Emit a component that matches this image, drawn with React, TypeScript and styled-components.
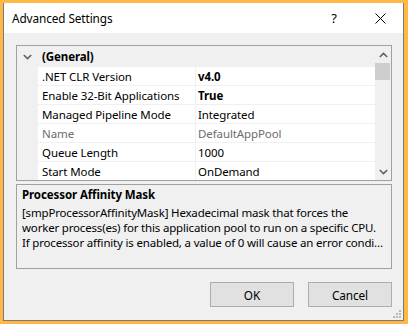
import React from "react";
import styled, { createGlobalStyle } from "styled-components";

const FONT = `"Noto Sans", "Open Sans", sans-serif`;

const GlobalStyle = createGlobalStyle`
  html, body { margin: 0; padding: 0; }
  body { font-family: ${FONT}; font-size: 11.5px; color: #000; letter-spacing: -0.1px; }
  * { box-sizing: border-box; }
`;

const Frame = styled.div`
  width: 408px;
  height: 324px;
  background: #ffb845;
  padding: 3px 4px 3px 3px;
  display: flex;
  overflow: hidden;
`;

const Window = styled.div`
  position: relative;
  flex: 1;
  min-width: 0;
  display: flex;
  flex-direction: column;
  background: #f0f0f0;
  border-left: 1px solid #7a7a7a;
  border-right: 1px solid #7a7a7a;
  border-bottom: 1px solid #7a7a7a;
`;

const TitleBar = styled.div`
  height: 30px;
  background: #ffffff;
  display: flex;
  align-items: center;
  flex-shrink: 0;
`;

const Title = styled.div`
  flex: 1;
  padding-left: 8px;
  font-size: 11.8px;
  line-height: 16px;
`;

const CaptionButton = styled.div`
  width: 46px;
  height: 30px;
  display: flex;
  align-items: center;
  justify-content: center;
  font-size: 13px;
`;

const Body = styled.div`
  flex: 1;
  min-width: 0;
  display: flex;
  flex-direction: column;
  padding: 12px 11px 0 12px;
`;

const Grid = styled.div`
  height: 136px;
  border: 1px solid #a0a0a0;
  display: flex;
  overflow: hidden;
  flex-shrink: 0;
`;

const Rows = styled.div`
  flex: 1;
  min-width: 0;
  display: flex;
  flex-direction: column;
  background: #ffffff;
  overflow: hidden;
`;

const CategoryRow = styled.div`
  height: 21px;
  flex-shrink: 0;
  display: flex;
  align-items: center;
  background: #f0f0f0;
  font-weight: 700;
`;

const Gutter = styled.div`
  width: 21px;
  align-self: stretch;
  flex-shrink: 0;
  background: #f0f0f0;
  display: flex;
  align-items: center;
  justify-content: center;
`;

const CategoryLabel = styled.div`
  padding-left: 4px;
`;

const PropRow = styled.div`
  height: 19px;
  flex-shrink: 0;
  display: flex;
  border-bottom: 1px solid #f0f0f0;
`;

const NameCell = styled.div<{ $muted?: boolean }>`
  width: 158px;
  flex-shrink: 0;
  padding-left: 4px;
  border-right: 1px solid #f0f0f0;
  display: flex;
  align-items: center;
  color: ${(p) => (p.$muted ? "#6d6d6d" : "#000")};
  white-space: nowrap;
  overflow: hidden;
`;

const ValueCell = styled.div<{ $bold?: boolean; $muted?: boolean }>`
  flex: 1;
  min-width: 0;
  padding-left: 2px;
  display: flex;
  align-items: center;
  font-weight: ${(p) => (p.$bold ? 700 : 400)};
  color: ${(p) => (p.$muted ? "#6d6d6d" : "#000")};
  white-space: nowrap;
  overflow: hidden;
`;

const ScrollBar = styled.div`
  width: 16px;
  flex-shrink: 0;
  background: #f0f0f0;
  display: flex;
  flex-direction: column;
`;

const ScrollArrow = styled.div`
  height: 17px;
  display: flex;
  align-items: center;
  justify-content: center;
`;

const ScrollTrack = styled.div`
  flex: 1;
`;

const Thumb = styled.div`
  height: 17px;
  margin-right: 1px;
  background: #cdcdcd;
`;

const Description = styled.div`
  margin-top: 3px;
  height: 85px;
  border: 1px solid #a0a0a0;
  padding: 2px 5px 0 5px;
  flex-shrink: 0;
  overflow: hidden;
`;

const DescTitle = styled.div`
  font-weight: 700;
  line-height: 16px;
  margin-bottom: 2px;
`;

const DescLine = styled.div`
  line-height: 15px;
  letter-spacing: -0.18px;
  white-space: nowrap;
  overflow: hidden;
`;

const ButtonRow = styled.div`
  margin-top: 13px;
  display: flex;
  justify-content: flex-end;
  gap: 14px;
`;

const Button = styled.button`
  width: 84px;
  height: 25px;
  background: #e1e1e1;
  border: 1px solid #adadad;
  font-family: ${FONT};
  font-size: 11.8px;
  letter-spacing: -0.1px;
  color: #000;
  padding: 0;
`;

const Grip = styled.svg`
  position: absolute;
  right: 2px;
  bottom: 2px;
`;

const Chevron = ({ dir }: { dir: "up" | "down" }) => (
  <svg width="9" height="6" viewBox="0 0 9 6">
    <polyline
      points={dir === "down" ? "0.8,1 4.5,4.6 8.2,1" : "0.8,5 4.5,1.4 8.2,5"}
      fill="none"
      stroke="#606060"
      strokeWidth="1.6"
    />
  </svg>
);

const rows: { name: string; value: string; bold?: boolean; muted?: boolean }[] = [
  { name: ".NET CLR Version", value: "v4.0", bold: true },
  { name: "Enable 32-Bit Applications", value: "True", bold: true },
  { name: "Managed Pipeline Mode", value: "Integrated" },
  { name: "Name", value: "DefaultAppPool", muted: true },
  { name: "Queue Length", value: "1000" },
  { name: "Start Mode", value: "OnDemand" },
];

export default function App() {
  return (
    <>
      <GlobalStyle />
      <Frame>
        <Window>
          <TitleBar>
            <Title>Advanced Settings</Title>
            <CaptionButton>?</CaptionButton>
            <CaptionButton>
              <svg width="11" height="11" viewBox="0 0 11 11">
                <path d="M0.5 0.5 L10.5 10.5 M10.5 0.5 L0.5 10.5" stroke="#000" strokeWidth="1" />
              </svg>
            </CaptionButton>
          </TitleBar>
          <Body>
            <Grid>
              <Rows>
                <CategoryRow>
                  <Gutter>
                    <Chevron dir="down" />
                  </Gutter>
                  <CategoryLabel>(General)</CategoryLabel>
                </CategoryRow>
                {rows.map((r) => (
                  <PropRow key={r.name}>
                    <Gutter />
                    <NameCell $muted={r.muted}>{r.name}</NameCell>
                    <ValueCell $bold={r.bold} $muted={r.muted}>
                      {r.value}
                    </ValueCell>
                  </PropRow>
                ))}
              </Rows>
              <ScrollBar>
                <ScrollArrow>
                  <Chevron dir="up" />
                </ScrollArrow>
                <ScrollTrack>
                  <Thumb />
                </ScrollTrack>
                <ScrollArrow>
                  <Chevron dir="down" />
                </ScrollArrow>
              </ScrollBar>
            </Grid>
            <Description>
              <DescTitle>Processor Affinity Mask</DescTitle>
              <DescLine>[smpProcessorAffinityMask] Hexadecimal mask that forces the</DescLine>
              <DescLine>worker process(es) for this application pool to run on a specific CPU.</DescLine>
              <DescLine>If processor affinity is enabled, a value of 0 will cause an error condi...</DescLine>
            </Description>
            <ButtonRow>
              <Button>OK</Button>
              <Button>Cancel</Button>
            </ButtonRow>
          </Body>
          <Grip width="8" height="8" viewBox="0 0 8 8">
            <rect x="6" y="0" width="2" height="2" fill="#b8b8b8" />
            <rect x="3" y="3" width="2" height="2" fill="#b8b8b8" />
            <rect x="6" y="3" width="2" height="2" fill="#b8b8b8" />
            <rect x="0" y="6" width="2" height="2" fill="#b8b8b8" />
            <rect x="3" y="6" width="2" height="2" fill="#b8b8b8" />
            <rect x="6" y="6" width="2" height="2" fill="#b8b8b8" />
          </Grip>
        </Window>
      </Frame>
    </>
  );
}
